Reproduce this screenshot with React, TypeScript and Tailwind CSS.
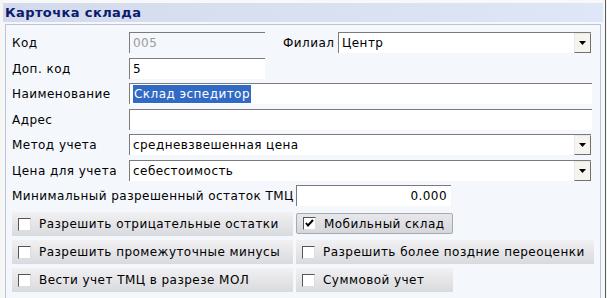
import React from "react";

const font = { fontFamily: '"DejaVu Sans", Verdana, sans-serif' };

function Input({ w, children, disabled, right }: { w: string; children?: React.ReactNode; disabled?: boolean; right?: boolean }) {
  return (
    <div
      className={`${w} h-[21px] flex items-center border-t border-l border-[#7b7b7b] ${disabled ? "bg-[#f4f7fc] text-[#9a9a9a]" : "bg-white text-black"} ${right ? "justify-end pr-[4px]" : "pl-[3px]"}`}
    >
      {children}
    </div>
  );
}

function Select({ w, value }: { w: string; value: string }) {
  return (
    <div className={`${w} h-[21px] flex items-stretch border-t border-l border-[#7b7b7b] bg-white`}>
      <div className="flex-1 flex items-center pl-[3px] text-black">{value}</div>
      <div className="w-[17px] flex items-center justify-center bg-[#f5f4ef] border-t border-l border-[#e8e8e8] border-r border-b border-r-[#707070] border-b-[#707070]">
        <svg width="8" height="5" viewBox="0 0 8 5">
          <path d="M0 0 H7 L3.5 4 Z" fill="#000" />
        </svg>
      </div>
    </div>
  );
}

function Check({ checked }: { checked?: boolean }) {
  return (
    <div className="w-[13px] h-[13px] shrink-0 bg-white border-t border-l border-t-[#555] border-l-[#555] border-r border-b border-r-[#dcdcdc] border-b-[#dcdcdc] flex items-center justify-center">
      {checked && (
        <svg width="9" height="9" viewBox="0 0 9 9">
          <path d="M1 4 L3 6.5 L8 1" stroke="#000" strokeWidth="2" fill="none" />
        </svg>
      )}
    </div>
  );
}

function CbBtn({ w, label, checked, bordered }: { w: string; label: string; checked?: boolean; bordered?: boolean }) {
  return (
    <div
      className={`${w} ${bordered ? "h-[21px] mt-[1px] border border-[#a9a9ad] rounded-[2px] bg-gradient-to-b from-[#e8e8ec] to-[#d6d7db]" : "h-[24px] bg-gradient-to-b from-[#f1f1f3] to-[#d9dade]"} flex items-center pl-[6px] gap-[8px] text-black`}
    >
      <Check checked={checked} />
      <span>{label}</span>
    </div>
  );
}

export default function App() {
  return (
    <div className="w-[607px] h-[298px] overflow-hidden bg-[#f6f6f2] flex text-[12px] tracking-[0.45px] leading-none" style={font}>
      <div className="w-[3px] shrink-0" />
      <div className="w-[600px] shrink-0 flex flex-col">
        <div className="h-[3px] shrink-0 bg-[#f8f8f8]" />
        <div className="h-[19px] shrink-0 bg-gradient-to-r from-[#d3daeb] to-[#dde7f8] flex items-center pl-[2px] text-[13px] font-bold tracking-[0.4px] text-[#0b1a6e]">
          Карточка склада
        </div>
        <div className="flex-1 min-h-0 overflow-hidden bg-[#f4f7fc] pl-[2px] pt-[2px]">
          <div className="w-[596px] h-[290px] border-t border-l border-r border-[#bfc5d0] pl-[6px] pt-[7px] flex flex-col">
            <div className="flex items-center h-[21px] shrink-0">
              <div className="w-[117px]">Код</div>
              <Input w="w-[136px]" disabled>005</Input>
              <div className="w-[55px] ml-[18px]">Филиал</div>
              <Select w="w-[253px]" value="Центр" />
            </div>
            <div className="flex items-center h-[21px] shrink-0 mt-[5px]">
              <div className="w-[117px]">Доп. код</div>
              <Input w="w-[136px]">5</Input>
            </div>
            <div className="flex items-center h-[21px] shrink-0 mt-[4px]">
              <div className="w-[117px]">Наименование</div>
              <Input w="w-[463px]">
                <span className="bg-[#316ac5] text-white py-[3px] px-[1px]">Склад эспедитор</span>
              </Input>
            </div>
            <div className="flex items-center h-[21px] shrink-0 mt-[5px]">
              <div className="w-[117px]">Адрес</div>
              <Input w="w-[463px]" />
            </div>
            <div className="flex items-center h-[21px] shrink-0 mt-[4px]">
              <div className="w-[117px]">Метод учета</div>
              <Select w="w-[462px]" value="средневзвешенная цена" />
            </div>
            <div className="flex items-center h-[21px] shrink-0 mt-[5px]">
              <div className="w-[117px]">Цена для учета</div>
              <Select w="w-[462px]" value="себестоимость" />
            </div>
            <div className="flex items-center h-[21px] shrink-0 mt-[4px]">
              <div className="w-[284px]">Минимальный разрешенный остаток ТМЦ</div>
              <Input w="w-[155px]" right>0.000</Input>
            </div>
            <div className="flex items-start shrink-0 mt-[6px] gap-[3px]">
              <CbBtn w="w-[281px]" label="Разрешить отрицательные остатки" />
              <CbBtn w="w-[157px]" label="Мобильный склад" checked bordered />
            </div>
            <div className="flex items-start shrink-0 mt-[4px] gap-[3px]">
              <CbBtn w="w-[281px]" label="Разрешить промежуточные минусы" />
              <CbBtn w="w-[298px]" label="Разрешить более поздние переоценки" />
            </div>
            <div className="flex items-start shrink-0 mt-[4px] gap-[3px]">
              <CbBtn w="w-[281px]" label="Вести учет ТМЦ в разрезе МОЛ" />
              <CbBtn w="w-[157px]" label="Суммовой учет" />
            </div>
          </div>
        </div>
      </div>
      <div className="w-[2px] shrink-0 bg-[#f4f7fc] mt-[3px]" />
      <div className="w-[1px] shrink-0 bg-[#5a5a5a]" />
      <div className="w-[1px] shrink-0 bg-[#f6f6f2]" />
    </div>
  );
}
